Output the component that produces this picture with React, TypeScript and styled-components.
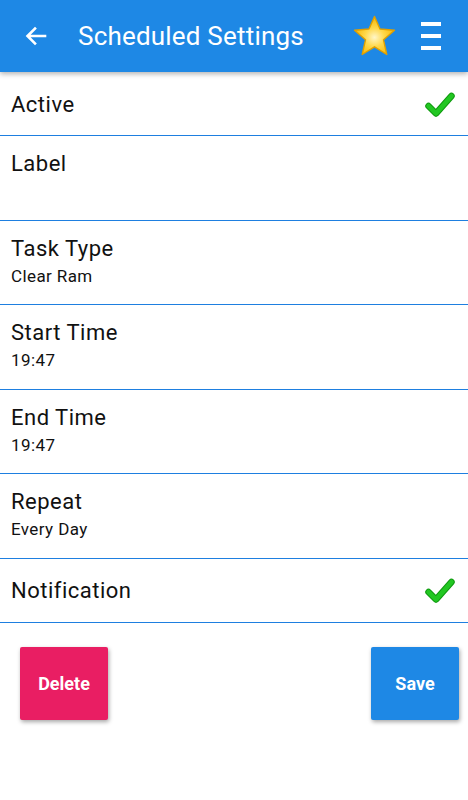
import React from 'react'
import styled, { createGlobalStyle } from 'styled-components'

const GlobalStyle = createGlobalStyle`
  html, body {
    margin: 0;
    padding: 0;
    background: #ffffff;
    font-family: Roboto, "Noto Sans", Arial, sans-serif;
  }
`

const Screen = styled.div`
  width: 468px;
  min-height: 800px;
  display: flex;
  flex-direction: column;
  background: #ffffff;
`

const Toolbar = styled.header`
  height: 72px;
  display: flex;
  align-items: center;
  background: #1e88e5;
  color: #ffffff;
  box-shadow: 0 2px 5px rgba(0, 0, 0, 0.3);
  position: relative;
  z-index: 1;
`

const BackButton = styled.div`
  width: 72px;
  padding-left: 24px;
  box-sizing: border-box;
  display: flex;
  align-items: center;
`

const Title = styled.h1`
  flex: 1;
  margin: 0 0 0 6px;
  font-size: 26px;
  font-weight: 400;
  letter-spacing: 0.2px;
`

const Actions = styled.div`
  display: flex;
  align-items: center;
  gap: 25px;
  padding-right: 27px;
`

const MenuIcon = styled.div`
  width: 20px;
  display: flex;
  flex-direction: column;
  gap: 8px;

  span {
    display: block;
    height: 4px;
    background: #ffffff;
  }
`

const List = styled.div`
  display: flex;
  flex-direction: column;
`

const Row = styled.div<{ tall?: boolean }>`
  height: ${(p) => (p.tall ? '84.5px' : '64px')};
  box-sizing: border-box;
  display: flex;
  align-items: ${(p) => (p.tall ? 'flex-start' : 'center')};
  justify-content: space-between;
  padding: ${(p) => (p.tall ? '0' : '2px')} 13px 0 11px;
  border-bottom: 1px solid #1e7fe0;
`

const RowText = styled.div<{ tall?: boolean }>`
  display: flex;
  flex-direction: column;
  padding-top: ${(p) => (p.tall ? '13px' : '0')};
`

const RowTitle = styled.div`
  font-size: 22px;
  line-height: 30px;
  letter-spacing: 0.5px;
  color: #111111;
`

const RowValue = styled.div`
  font-size: 17px;
  line-height: 22px;
  letter-spacing: 0.4px;
  color: #111111;
  margin-top: 1px;
`

const ButtonBar = styled.div`
  display: flex;
  justify-content: space-between;
  padding: 24px 9px 0 20px;
`

const ActionButton = styled.button<{ variant: 'delete' | 'save' }>`
  width: 88px;
  height: 73px;
  border: none;
  border-radius: 2px;
  background: ${(p) => (p.variant === 'delete' ? '#e91e63' : '#1e88e5')};
  color: #ffffff;
  font-family: Roboto, Arial, sans-serif;
  font-size: 18px;
  font-weight: 700;
  box-shadow: 1px 2px 4px rgba(0, 0, 0, 0.35);
  cursor: pointer;
`

const Arrow = () => (
  <svg width="24" height="24" viewBox="0 0 24 24">
    <path d="M21 12H4M11 4.5L3.5 12 11 19.5" fill="none" stroke="#fff" strokeWidth="2.6" strokeLinecap="square" />
  </svg>
)

const Star = () => (
  <svg width="43" height="42" viewBox="0 0 43 42">
    <defs>
      <radialGradient id="starFill" cx="50%" cy="55%" r="55%">
        <stop offset="0%" stopColor="#fff6c8" />
        <stop offset="45%" stopColor="#ffd84a" />
        <stop offset="100%" stopColor="#f7b500" />
      </radialGradient>
    </defs>
    <path
      d="M21.5 1.5 L27 14 L41.5 15.2 L30.5 24.8 L33.8 39.5 L21.5 31.8 L9.2 39.5 L12.5 24.8 L1.5 15.2 L16 14 Z"
      fill="url(#starFill)"
      stroke="#e0a000"
      strokeWidth="1.4"
      strokeLinejoin="round"
    />
  </svg>
)

const Check = () => (
  <svg width="30" height="26" viewBox="0 0 30 26">
    <path d="M3.5 14 L11 21.5 L26.5 4" fill="none" stroke="#109a10" strokeWidth="6.5" strokeLinecap="round" strokeLinejoin="round" />
    <path d="M3.5 14 L11 21.5 L26.5 4" fill="none" stroke="#22c722" strokeWidth="4.5" strokeLinecap="round" strokeLinejoin="round" />
  </svg>
)

type Setting = { title: string; value?: string; tall?: boolean; checked?: boolean }

const settings: Setting[] = [
  { title: 'Active', checked: true },
  { title: 'Label', tall: true },
  { title: 'Task Type', value: 'Clear Ram', tall: true },
  { title: 'Start Time', value: '19:47', tall: true },
  { title: 'End Time', value: '19:47', tall: true },
  { title: 'Repeat', value: 'Every Day', tall: true },
  { title: 'Notification', checked: true },
]

const App = () => {
  return (
    <Screen>
      <GlobalStyle />
      <Toolbar>
        <BackButton>
          <Arrow />
        </BackButton>
        <Title>Scheduled Settings</Title>
        <Actions>
          <Star />
          <MenuIcon>
            <span />
            <span />
            <span />
          </MenuIcon>
        </Actions>
      </Toolbar>
      <List>
        {settings.map((s) => (
          <Row key={s.title} tall={s.tall}>
            <RowText tall={s.tall}>
              <RowTitle>{s.title}</RowTitle>
              {s.value && <RowValue>{s.value}</RowValue>}
            </RowText>
            {s.checked && <Check />}
          </Row>
        ))}
      </List>
      <ButtonBar>
        <ActionButton variant="delete">Delete</ActionButton>
        <ActionButton variant="save">Save</ActionButton>
      </ButtonBar>
    </Screen>
  )
}

export default App
